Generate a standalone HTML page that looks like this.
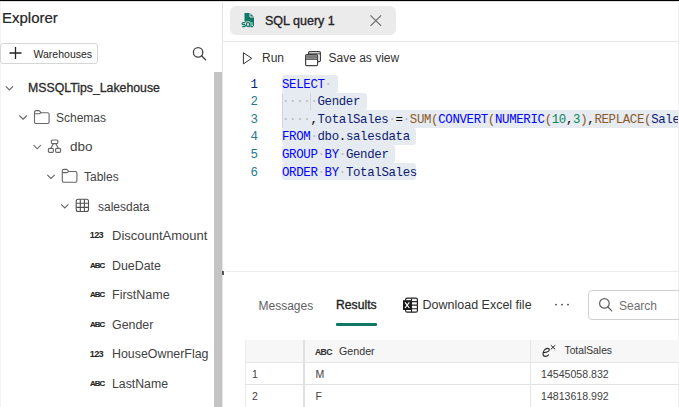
<!DOCTYPE html>
<html><head><meta charset="utf-8">
<style>
*{box-sizing:border-box;margin:0;padding:0}
html,body{width:679px;height:407px;overflow:hidden;background:#fff}
body{position:relative;font-family:"Liberation Sans",sans-serif;color:#242424}
.a{position:absolute;white-space:pre;line-height:1}
svg{position:absolute;overflow:visible}
.t{font-size:12.4px;color:#424242}
.code{font-family:"Liberation Mono",monospace;font-size:12.4px;letter-spacing:-0.34px;color:#000}
.kw{color:#0000ff}
.fn{color:#8a5a28}
.id{color:#0d1a70}
.num{color:#098658}
.ws{color:#b8b8b8}
.sel{position:absolute;background:#e5ebf1;border-radius:3px}
</style></head><body>
<!-- top black line -->
<div class="a" style="left:0;top:0;width:679px;height:1px;background:#000"></div>
<div class="a" style="left:0;top:1px;width:679px;height:1px;background:#555;opacity:.18"></div>

<!-- left panel -->
<div class="a" style="left:0;top:2px;width:1px;height:405px;background:#f3f3f3"></div>
<div class="a" style="left:2px;top:10px;font-size:15px;color:#242424;-webkit-text-stroke:0.2px #242424">Explorer</div>
<div class="a" style="left:0.3px;top:42.5px;width:97.7px;height:21.8px;border:1px solid #d6d6d6;border-radius:3px"></div>
<svg style="left:0;top:0" width="30" height="70"><path d="M15.5 47v12M9.5 53h12" stroke="#242424" stroke-width="1.3" fill="none"/></svg>
<div class="a" style="left:33.5px;top:49px;font-size:10.5px;color:#242424">Warehouses</div>
<svg style="left:0;top:0" width="220" height="70"><circle cx="198.1" cy="52.4" r="4.7" stroke="#424242" stroke-width="1.3" fill="none"/><path d="M201.5 55.8l4 4" stroke="#424242" stroke-width="1.4" stroke-linecap="round"/></svg>

<!-- scrollbar -->
<div class="a" style="left:214px;top:72px;width:8px;height:335px;background:#c4c4c4"></div>
<div class="a" style="left:222px;top:2px;width:1px;height:405px;background:#e4e4e4"></div>

<!-- tree -->
<svg style="left:0;top:0" width="222" height="407" fill="none" stroke="#666" stroke-width="1.1">
 <path d="M5.8 86.4l3.6 3.6l3.6-3.6"/>
 <path d="M19.4 115.5l3.7 3.7l3.7-3.7"/>
 <path d="M33.6 145.2l3.6 3.6l3.6-3.6"/>
 <path d="M47.3 174.8l3.7 3.7l3.7-3.7"/>
 <path d="M61.2 204.3l3.6 3.6l3.6-3.6"/>
 <!-- folder Schemas -->
 <path d="M34.5 112.2 a1.6 1.6 0 0 1 1.6-1.6 h2.4 a1.6 1.6 0 0 1 1.2 0.6 l1.2 1.5 h6.6 a1.6 1.6 0 0 1 1.6 1.6 v7.6 a1.6 1.6 0 0 1 -1.6 1.6 h-11.4 a1.6 1.6 0 0 1 -1.6 -1.6 z"/><path d="M34.5 113.8 h4.6 a1.2 1.2 0 0 0 0.9-0.4 l0.9-1"/>
 <!-- schema dbo -->
 <rect x="51.4" y="140" width="6.4" height="3.6" rx="1.1" stroke-width="1.15"/>
 <rect x="48.4" y="148.3" width="5" height="4" rx="1.1" stroke-width="1.15"/>
 <rect x="55.6" y="148.3" width="5" height="4" rx="1.1" stroke-width="1.15"/>
 <path d="M53.3 143.8l-2.3 4.3M55.9 143.8l2.3 4.3" stroke-width="1.1"/>
 <!-- folder Tables -->
 <path d="M62.3 171 a1.6 1.6 0 0 1 1.6-1.6 h2.4 a1.6 1.6 0 0 1 1.2 0.6 l1.2 1.5 h6.6 a1.6 1.6 0 0 1 1.6 1.6 v7.6 a1.6 1.6 0 0 1 -1.6 1.6 h-11.4 a1.6 1.6 0 0 1 -1.6 -1.6 z"/><path d="M62.3 172.6 h4.6 a1.2 1.2 0 0 0 0.9-0.4 l0.9-1"/>
 <!-- table icon -->
 <rect x="76.2" y="199.2" width="12.3" height="12.3" rx="2" stroke="#505050" stroke-width="1.1"/>
 <path d="M80.3 199.2v12.3M84.4 199.2v12.3M76.2 203.3h12.3M76.2 207.4h12.3" stroke="#505050" stroke-width="1.1"/>
</svg>
<div class="a" style="left:28px;top:82px;font-size:12.3px;color:#2b2b2b;-webkit-text-stroke:0.3px #2b2b2b">MSSQLTips_Lakehouse</div>
<div class="a t" style="left:56px;top:111.5px;font-size:12px">Schemas</div>
<div class="a t" style="left:70px;top:139.5px;font-size:13.5px">dbo</div>
<div class="a t" style="left:84px;top:170.5px;font-size:12px">Tables</div>
<div class="a t" style="left:98px;top:200.5px;font-size:12px">salesdata</div>
<div class="a" style="left:89.8px;top:231px;font-size:9.2px;font-weight:700;color:#242424;letter-spacing:-0.75px">123</div>
<div class="a t" style="left:112px;top:229px;font-size:13px">DiscountAmount</div>
<div class="a" style="left:90px;top:261.8px;font-size:7.8px;font-weight:700;color:#242424;letter-spacing:-0.85px;-webkit-text-stroke:0.15px #242424">ABC</div>
<div class="a t" style="left:112px;top:259.5px">DueDate</div>
<div class="a" style="left:90px;top:291.3px;font-size:7.8px;font-weight:700;color:#242424;letter-spacing:-0.85px;-webkit-text-stroke:0.15px #242424">ABC</div>
<div class="a t" style="left:112px;top:289px;font-size:12.5px">FirstName</div>
<div class="a" style="left:90px;top:320.8px;font-size:7.8px;font-weight:700;color:#242424;letter-spacing:-0.85px;-webkit-text-stroke:0.15px #242424">ABC</div>
<div class="a t" style="left:112px;top:318.5px">Gender</div>
<div class="a" style="left:89.8px;top:349.5px;font-size:9.2px;font-weight:700;color:#242424;letter-spacing:-0.75px">123</div>
<div class="a t" style="left:112px;top:348px">HouseOwnerFlag</div>
<div class="a" style="left:90px;top:379.8px;font-size:7.8px;font-weight:700;color:#242424;letter-spacing:-0.85px;-webkit-text-stroke:0.15px #242424">ABC</div>
<div class="a t" style="left:112px;top:378px;font-size:12.3px">LastName</div>

<!-- right: tab bar -->
<div class="a" style="left:230px;top:6px;width:166px;height:29px;background:#ebebeb;border-radius:6px"></div>
<svg style="left:0;top:0" width="400" height="40">
 <path d="M244.5 13h5.5l4 4v9h-9.5z" fill="#117865"/>
 <path d="M250 13.2v3.8h3.8" fill="none" stroke="#ebebeb" stroke-width="1"/>
 <path d="M245.2 22.6h-2.1a0.9 0.9 0 0 0 0 2h1.3a0.9 0.9 0 0 1 0 2h-2.2M247.6 22.6h0.9a1 1 0 0 1 1 1v1.8a1 1 0 0 1-1 1h-0.9a1 1 0 0 1-1-1v-1.8a1 1 0 0 1 1-1zM248.6 26l1 1M251 22.3v4.3h2" fill="none" stroke="#ebebeb" stroke-width="2.8" stroke-linejoin="round"/><path d="M245.2 22.6h-2.1a0.9 0.9 0 0 0 0 2h1.3a0.9 0.9 0 0 1 0 2h-2.2M247.6 22.6h0.9a1 1 0 0 1 1 1v1.8a1 1 0 0 1-1 1h-0.9a1 1 0 0 1-1-1v-1.8a1 1 0 0 1 1-1zM248.6 26l1 1M251 22.3v4.3h2" fill="none" stroke="#117865" stroke-width="1.1"/>
 <path d="M370.5 15.3l10.7 10.5M381.2 15.3l-10.7 10.5" stroke="#666" stroke-width="1.1"/>
</svg>
<div class="a" style="left:265px;top:15px;font-size:12.5px;color:#242424;-webkit-text-stroke:0.35px #242424">SQL query 1</div>
<div class="a" style="left:222px;top:41px;width:457px;height:1px;background:#e6e6e6"></div>

<!-- toolbar -->
<svg style="left:0;top:0" width="400" height="70" fill="none">
 <path d="M243.4 52.7v11.2l8.3-5.6z" stroke="#333" stroke-width="1" stroke-linejoin="round"/>
 <rect x="308.6" y="51.6" width="11.8" height="10" rx="1.2" stroke="#424242" stroke-width="1.2"/>
 <path d="M308.6 53.8h11.8" stroke="#424242" stroke-width="1"/>
 <rect x="305.6" y="54.6" width="12" height="11" rx="1.2" fill="#fff" stroke="#424242" stroke-width="1.2"/>
 <rect x="306.1" y="55.1" width="11" height="3.4" fill="#7a7a7a"/>
 <path d="M306 59.2h11.2" stroke="#333" stroke-width="1.1"/>
</svg>
<div class="a" style="left:262px;top:51.5px;font-size:12px;color:#333">Run</div>
<div class="a" style="left:328.5px;top:51.5px;font-size:12px;color:#333">Save as view</div>

<!-- editor -->
<div class="sel" style="left:281.5px;top:75.00px;width:56.8px;height:17.55px"></div>
<div class="sel" style="left:281.5px;top:92.55px;width:85.2px;height:17.55px"></div>
<div class="sel" style="left:281.5px;top:110.10px;width:397.5px;height:17.55px;border-radius:0"></div>
<div class="sel" style="left:281.5px;top:127.65px;width:134.9px;height:17.55px"></div>
<div class="sel" style="left:281.5px;top:145.20px;width:113.6px;height:17.55px"></div>
<div class="sel" style="left:281.5px;top:162.75px;width:134.9px;height:17.55px"></div>
<div class="a code" style="left:240px;top:76.7px;width:17.5px;text-align:right;color:#237893;line-height:17.6px"><span style="color:#0b216f">1</span>
2
3
4
5
6</div>
<div class="a" style="left:282px;top:92.5px;width:1px;height:35px;background:#d0d4d9"></div>
<div class="a" style="left:310px;top:92.5px;width:1px;height:17.5px;background:#d0d4d9"></div>
<div class="a code" style="left:282px;top:76.7px;line-height:17.6px"><span class="kw">SELECT</span><span class="ws">·</span>
<span class="ws">·····</span><span class="id">Gender</span>
<span class="ws">····</span>,<span class="id">TotalSales</span><span class="ws">·</span>=<span class="ws">·</span><span class="fn">SUM(</span><span class="kw">CONVERT</span><span class="fn">(</span><span class="kw">NUMERIC</span><span class="fn">(</span><span class="num">10</span>,<span class="num">3</span><span class="fn">)</span>,<span class="fn">REPLACE(</span><span class="id">Sale</span>
<span class="kw">FROM</span><span class="ws">·</span><span class="id">dbo</span>.<span class="id">salesdata</span>
<span class="kw">GROUP</span><span class="ws">·</span><span class="kw">BY</span><span class="ws">·</span><span class="id">Gender</span>
<span class="kw">ORDER</span><span class="ws">·</span><span class="kw">BY</span><span class="ws">·</span><span class="id">TotalSales</span></div>

<div class="a" style="left:678px;top:1px;width:1px;height:406px;background:#f0f0f0"></div>
<!-- splitter -->
<div class="a" style="left:225px;top:271px;width:454px;height:1px;background:#ececec"></div>
<div class="a" style="left:222px;top:271px;width:2px;height:4px;background:#555"></div>

<!-- results tabs -->
<div class="a" style="left:258.5px;top:299.5px;font-size:12px;color:#616161">Messages</div>
<div class="a" style="left:336px;top:298.5px;font-size:12.2px;color:#242424;-webkit-text-stroke:0.35px #242424">Results</div>
<div class="a" style="left:335.5px;top:323px;width:41.5px;height:2.5px;background:#117865;border-radius:1px"></div>
<svg style="left:0;top:0" width="679" height="330" fill="none">
 <rect x="405.6" y="298.2" width="11.8" height="14" rx="1.5" stroke="#242424" stroke-width="1.2"/>
 <path d="M405.6 301.6h11.8M405.6 305.1h11.8M405.6 308.7h11.8M411.5 298.2v14" stroke="#242424" stroke-width="1.1"/>
 <rect x="403" y="300.2" width="8.4" height="9.8" fill="#1a1a1a"/>
 <path d="M405 302.4l4.3 5.6M409.3 302.4l-4.3 5.6" stroke="#fff" stroke-width="1.2"/>
 <circle cx="556" cy="304.6" r="0.9" fill="#424242"/>
 <circle cx="562" cy="304.6" r="0.9" fill="#424242"/>
 <circle cx="568" cy="304.6" r="0.9" fill="#424242"/>
 <circle cx="604.4" cy="303.4" r="4.8" stroke="#616161" stroke-width="1.2"/>
 <path d="M607.9 307l3.9 3.9" stroke="#616161" stroke-width="1.3" stroke-linecap="round"/>
</svg>
<div class="a" style="left:422.5px;top:299.3px;font-size:12.5px;color:#333">Download Excel file</div>
<div class="a" style="left:587.5px;top:290px;width:100px;height:29.5px;border:1px solid #d1d1d1;border-radius:4px"></div>
<div class="a" style="left:619px;top:299.5px;font-size:12px;color:#707070">Search</div>

<!-- table -->
<div class="a" style="left:245px;top:340px;width:434px;height:22px;background:#f7f7f7"></div>
<div class="a" style="left:245px;top:340px;width:1px;height:67px;background:#ebebeb"></div>
<div class="a" style="left:245px;top:362px;width:434px;height:1px;background:#e6e6e6"></div>
<div class="a" style="left:245px;top:384px;width:434px;height:1px;background:#e3e3e3"></div>
<div class="a" style="left:303px;top:340px;width:2px;height:67px;background:#e0e0e0"></div>
<div class="a" style="left:530px;top:340px;width:1px;height:67px;background:#e6e6e6"></div>
<div class="a" style="left:315px;top:347.5px;font-size:8.6px;font-weight:700;color:#333;letter-spacing:-0.6px;-webkit-text-stroke:0.1px #333">ABC</div>
<div class="a" style="left:339px;top:345.6px;font-size:10.7px;color:#333">Gender</div>
<svg style="left:0;top:0" width="679" height="407" fill="none" stroke="#242424">
 <path d="M543.6 352.6C546.2 352.4 549.3 351.4 549.3 349.7C549.3 348.7 548.4 348.4 547.5 348.4C544.8 348.4 543 351.4 543 353.9C543 355.7 544 356.4 545.3 356.4C546.8 356.4 547.9 355.7 549 354.7" stroke-width="1.1"/>
 <path d="M550.8 345.2l4.4 4.2M555.2 345.2l-4.4 4.2" stroke-width="1"/>
</svg>
<div class="a" style="left:564.5px;top:346px;font-size:10.3px;color:#333">TotalSales</div>
<div class="a" style="left:252px;top:369px;font-size:10.5px;color:#424242">1</div>
<div class="a" style="left:315.5px;top:369px;font-size:10.5px;color:#424242">M</div>
<div class="a" style="left:541px;top:369px;font-size:10.6px;color:#424242">14545058.832</div>
<div class="a" style="left:252px;top:391px;font-size:10.5px;color:#424242">2</div>
<div class="a" style="left:315.5px;top:391px;font-size:10.5px;color:#424242">F</div>
<div class="a" style="left:541px;top:391px;font-size:10.6px;color:#424242">14813618.992</div>
</body></html>
